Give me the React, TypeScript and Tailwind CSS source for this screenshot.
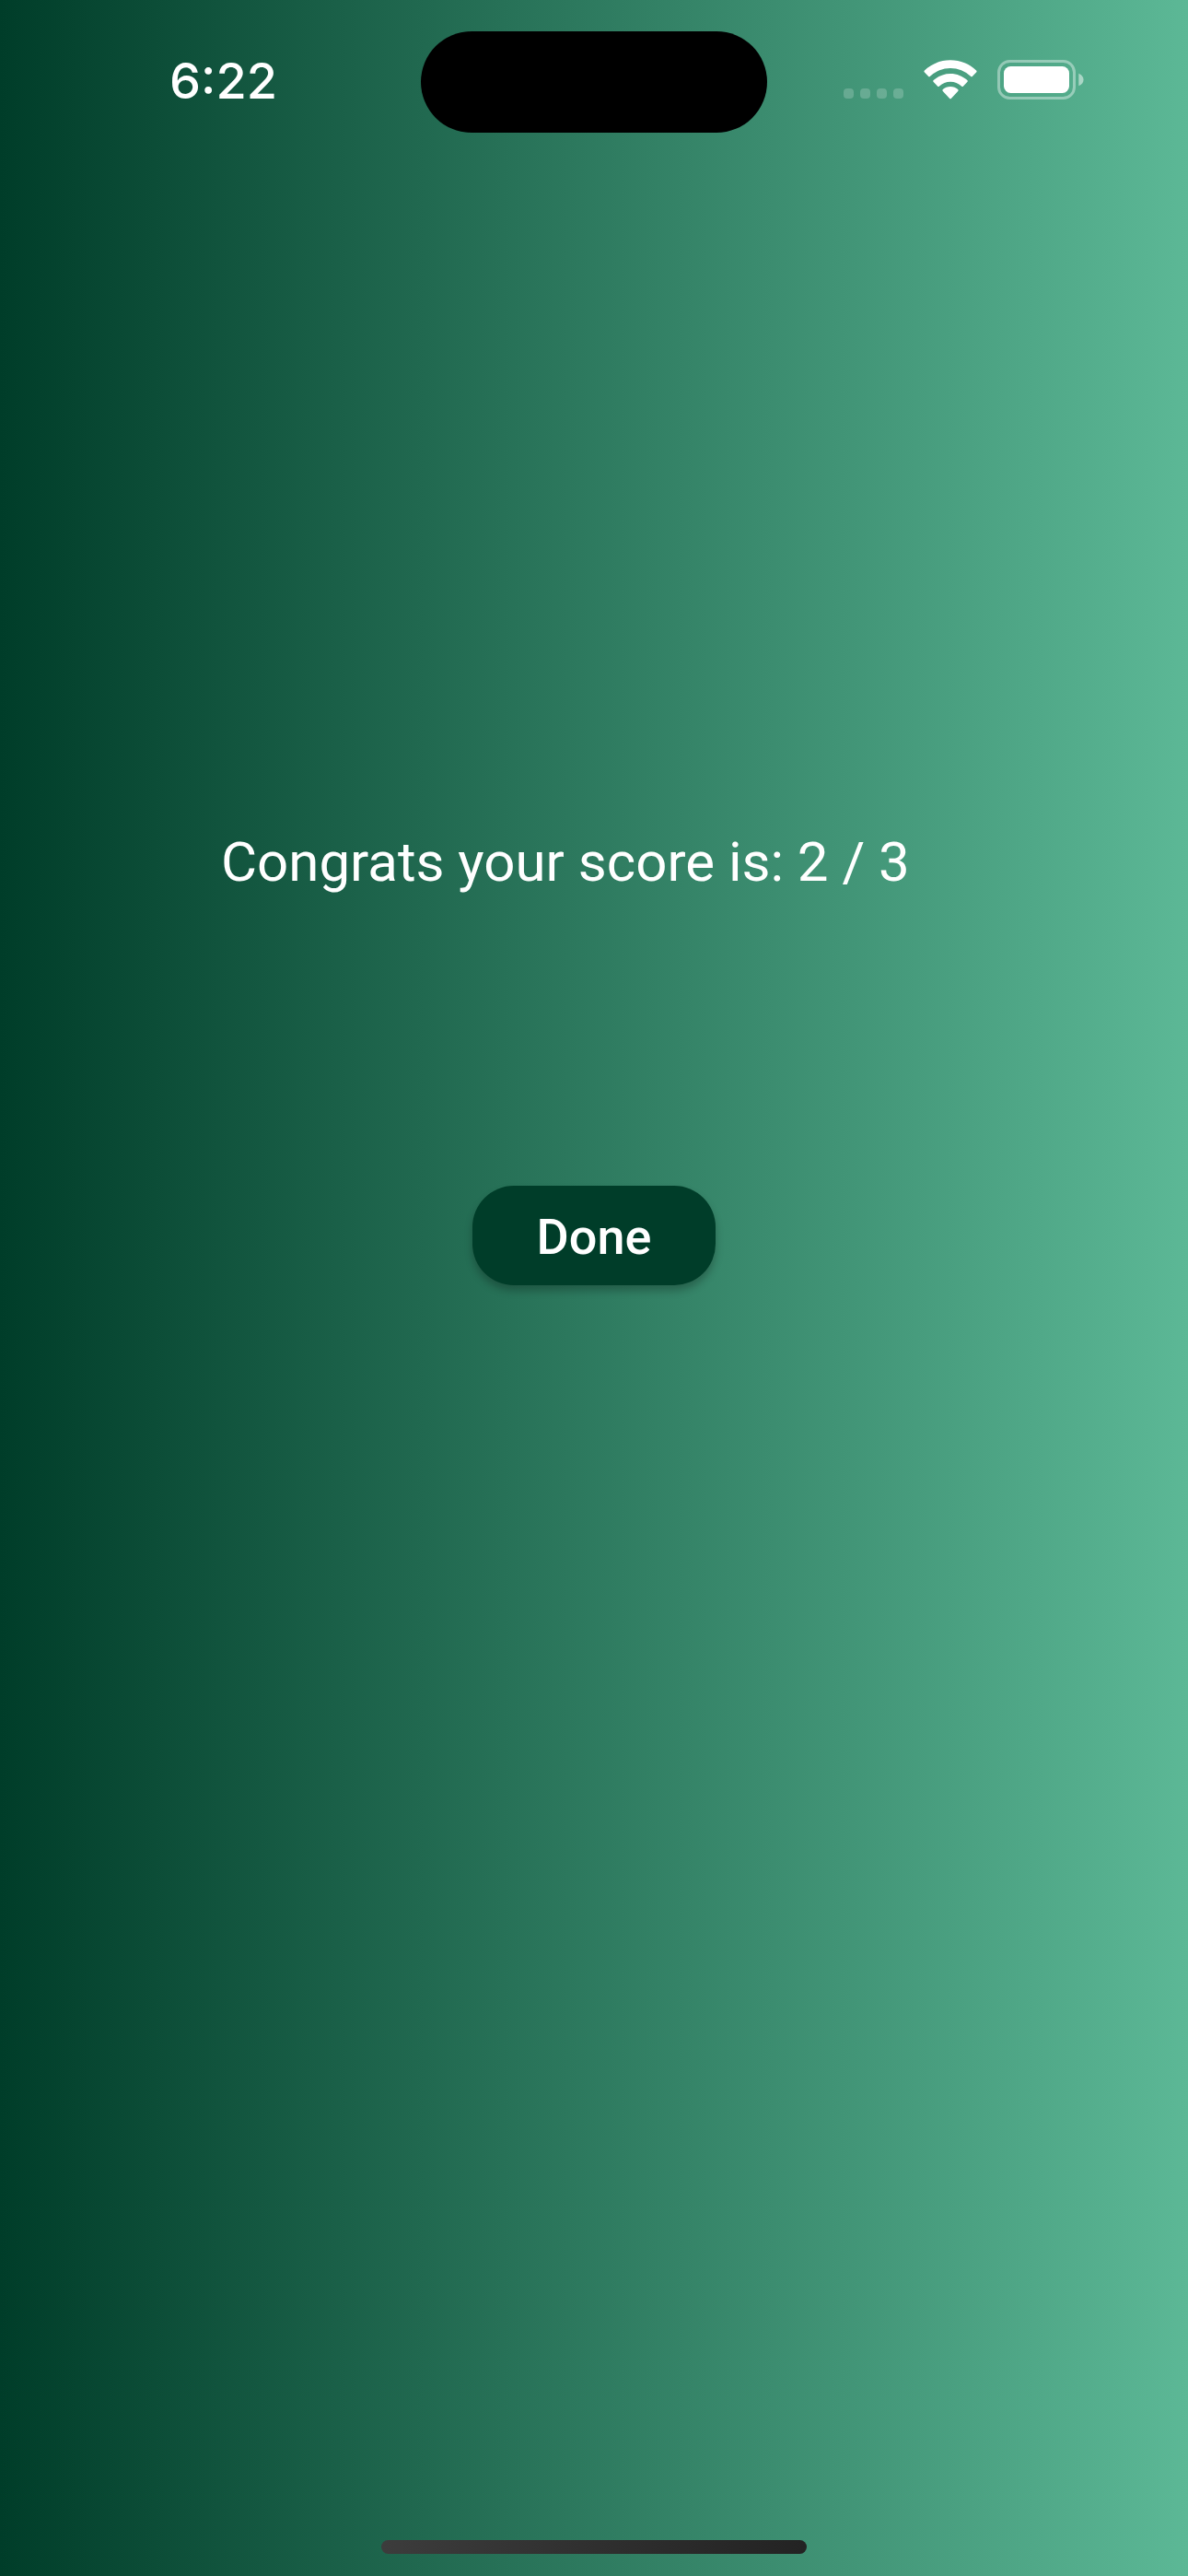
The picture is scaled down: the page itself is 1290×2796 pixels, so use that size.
const DOTS = [0, 1, 2, 3];

function StatusBar() {
  return (
    <header className="grid h-[178px] grid-cols-[1fr_376px_1fr] items-center">
      <time className="pb-0.5 pl-7 text-center font-['Inter',sans-serif] text-[54px] font-medium leading-none">
        6:22
      </time>
      <div className="h-[110px] rounded-full bg-black" />
      <div className="flex items-end justify-center gap-[22px] pr-[29px] pb-[5px]">
        <div className="flex gap-[7px] pb-px">
          {DOTS.map((dot) => (
            <span key={dot} className="size-[11px] rounded-[4px] bg-white/20" />
          ))}
        </div>
        <svg width="58" height="43" viewBox="0 0 58 43" fill="white" role="img" aria-label="Wi-Fi">
          <path d="M29 .3C40 .3 49.900 4.500 57.100 11.400q1 1 0 2L53 17.800q-1 1-2 0A31.800 31.800 0 0 0 7 17.800q-1 1-2 0L.9 13.400q-1-1 0-2C8.100 4.500 18 .3 29 .3Z" />
          <path d="M29 15C36 15 42.500 17.700 47.300 22.100q1 1 0 2L43 28.400q-1 1-2 0A17.600 17.600 0 0 0 17 28.400q-1 1-2 0L10.700 24.100q-1-1 0-2C15.500 17.700 22 15 29 15Z" />
          <path d="M29 29C32.200 29 35 30.100 37.200 32.100q1 1 0 2L30 41.800q-1 1-2 0L20.800 34.100q-1-1 0-2C23 30.100 25.800 29 29 29Z" />
        </svg>
        <svg width="95" height="43" viewBox="0 0 95 43" fill="none" role="img" aria-label="Battery">
          <rect x="1.500" y="1.500" width="82" height="40" rx="12" stroke="white" strokeOpacity=".4" strokeWidth="3" />
          <rect x="7" y="7" width="71" height="29" rx="7.500" fill="white" />
          <path d="M88.300 14.700v13.600c7-2.800 7-10.800 0-13.600Z" fill="white" fillOpacity=".5" />
        </svg>
      </div>
    </header>
  );
}

export default function App() {
  return (
    <div className="flex min-h-screen flex-col bg-linear-to-r/srgb from-[#003d29] to-[#5cb896] font-['Roboto',sans-serif] text-white">
      <StatusBar />
      <main className="flex flex-1 flex-col pt-[723px]">
        <h1 className="ml-60 text-[60px] leading-[70px]">Congrats your score is: 2 / 3</h1>
        <button
          type="button"
          className="mt-[316px] h-[108px] w-[264px] self-center rounded-[45px] bg-[#003d29] pt-0.5 text-[54px] font-medium shadow-[0_6px_8px_rgba(0,0,0,0.25)]"
        >
          Done
        </button>
      </main>
      <footer className="flex justify-center pb-6">
        <div className="h-[15px] w-[462px] rounded-full bg-linear-to-r from-[#3c3c3c] to-[#232323]" />
      </footer>
    </div>
  );
}
